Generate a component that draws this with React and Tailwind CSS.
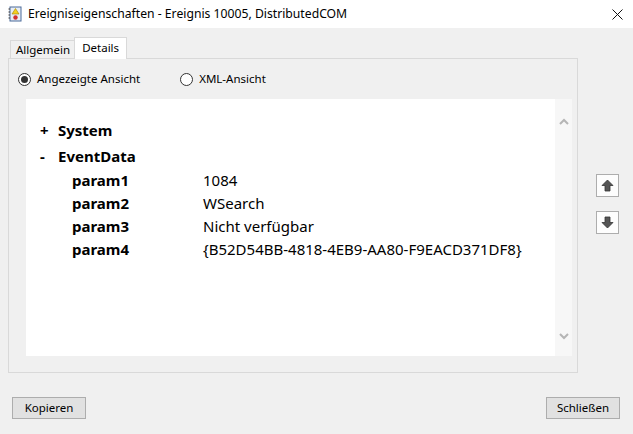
import React, { useState } from "react";

const font = { fontFamily: '"Noto Sans", "Open Sans", sans-serif' };

// Radio button, Windows style
const Radio = ({ checked, label, onClick }) => (
  <button type="button" onClick={onClick} className="flex items-center gap-[6px] text-[11.5px] text-black">
    <span className="w-[13px] h-[13px] rounded-full border border-[#333] bg-white flex items-center justify-center">
      {checked && <span className="w-[7px] h-[7px] rounded-full bg-[#333]"></span>}
    </span>
    <span>{label}</span>
  </button>
);

const ArrowButton = ({ up }) => (
  <button type="button" className="w-[23px] h-[23px] border border-[#adadad] bg-[#fdfdfd] flex items-center justify-center">
    <svg width="13" height="13" viewBox="0 0 13 13">
      <path
        d={up ? "M6.5 1 L12 6.5 L9 6.5 L9 12 L4 12 L4 6.5 L1 6.5 Z" : "M6.5 12 L12 6.5 L9 6.5 L9 1 L4 1 L4 6.5 L1 6.5 Z"}
        fill="#555"
        stroke="#333"
        strokeWidth="0.8"
      />
    </svg>
  </button>
);

const params = [
  ["param1", "1084"],
  ["param2", "WSearch"],
  ["param3", "Nicht verfügbar"],
  ["param4", "{B52D54BB-4818-4EB9-AA80-F9EACD371DF8}"],
];

export default function App() {
  const [view, setView] = useState("friendly");

  return (
    <div className="w-[633px] h-[434px] bg-[#f0f0f0] flex flex-col overflow-hidden" style={font}>
      {/* Title bar */}
      <div className="h-[28px] bg-white flex items-center pl-[8px] pr-[10px] shrink-0">
        <svg width="14" height="16" viewBox="0 0 14 16" className="mr-[6px]">
          <rect x="2" y="1" width="11" height="14" fill="#e8eef6" stroke="#4a6a9a" />
          <path d="M2 3h-1.5M2 6h-1.5M2 9h-1.5M2 12h-1.5" stroke="#333" />
          <path d="M7.5 2.5 L11 8 L4 8 Z" fill="#f5d020" stroke="#a08000" strokeWidth="0.6" />
          <circle cx="7.5" cy="11.5" r="2.2" fill="#d03030" />
        </svg>
        <span className="text-[12.2px] text-black">Ereigniseigenschaften - Ereignis 10005, DistributedCOM</span>
        <div className="flex-1"></div>
        <svg width="11" height="11" viewBox="0 0 11 11">
          <path d="M0.5 0.5 L10.5 10.5 M10.5 0.5 L0.5 10.5" stroke="#111" strokeWidth="1" />
        </svg>
      </div>

      {/* Body */}
      <div className="flex-1 flex flex-col px-[8px] pt-[8px]">
        <div className="flex">
          <div className="w-[570px] flex flex-col">
            {/* Tabs */}
            <div className="flex items-end h-[22px] pl-[2px]">
              <div className="h-[18px] pl-[5px] pr-[4px] border border-b-0 border-r-0 border-[#d9d9d9] bg-[#f0f0f0] text-[11.5px] flex items-center">Allgemein</div>
              <div className="h-[22px] px-[7px] border border-b-0 border-[#d9d9d9] bg-white text-[11.5px] flex items-start pt-[1px] -mb-px relative z-10">Details</div>
            </div>
            {/* Panel */}
            <div className="h-[315px] border border-[#d9d9d9] bg-[#f0f0f0] flex flex-col pl-[9px] pr-[5px]">
              <div className="h-[40px] flex items-center gap-[40px]">
                <Radio checked={view === "friendly"} label="Angezeigte Ansicht" onClick={() => setView("friendly")} />
                <Radio checked={view === "xml"} label="XML-Ansicht" onClick={() => setView("xml")} />
              </div>
              <div className="ml-[8px] h-[257px] bg-white flex">
                <div className="flex-1 pt-[18px] pl-[14px] text-[15px] text-black">
                  <div className="flex items-center h-[26px] font-bold">
                    <span className="w-[18px]">+</span>
                    <span>System</span>
                  </div>
                  <div className="flex items-center h-[26px] font-bold">
                    <span className="w-[18px]">-</span>
                    <span>EventData</span>
                  </div>
                  <div className="pl-[32px] flex flex-col">
                    {params.map(([k, v]) => (
                      <div key={k} className="flex items-center h-[23px]">
                        <span className="w-[131px] font-bold">{k}</span>
                        <span>{v}</span>
                      </div>
                    ))}
                  </div>
                </div>
                {/* Scrollbar */}
                <div className="w-[17px] bg-[#f7f7f7] flex flex-col items-center justify-between pt-[19px] pb-[16px]">
                  <svg width="10" height="7" viewBox="0 0 10 7">
                    <path d="M1 6 L5 2 L9 6" stroke="#b5b5b5" strokeWidth="2" fill="none" />
                  </svg>
                  <svg width="10" height="7" viewBox="0 0 10 7">
                    <path d="M1 1 L5 5 L9 1" stroke="#b5b5b5" strokeWidth="2" fill="none" />
                  </svg>
                </div>
              </div>
            </div>
          </div>
          <div className="flex-1 flex flex-col items-center pt-[138px] gap-[14px] pl-[11px]">
            <ArrowButton up />
            <ArrowButton />
          </div>
        </div>

        {/* Footer buttons */}
        <div className="flex justify-between items-center mt-[24px] px-[4px]">
          <button type="button" className="w-[74px] h-[22px] border border-[#adadad] bg-[#e1e1e1] text-[11.5px] text-black">Kopieren</button>
          <button type="button" className="w-[74px] h-[22px] border border-[#adadad] bg-[#e1e1e1] text-[11.5px] text-black mr-[1px]">Schließen</button>
        </div>
      </div>
    </div>
  );
}
